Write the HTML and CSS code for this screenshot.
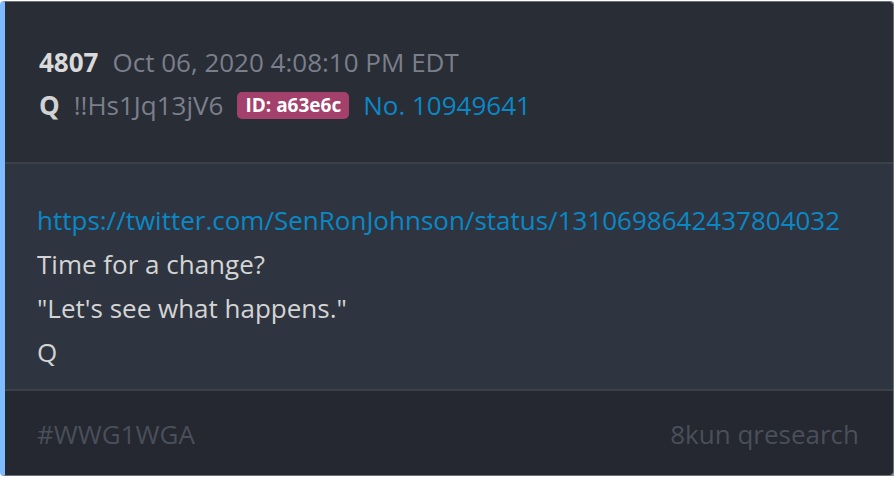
FILE: index.html
```html
<!DOCTYPE html>
<html lang="en">
<head>
  <meta charset="UTF-8">
  <meta name="viewport" content="width=device-width, initial-scale=1.0">
  <title>4807</title>
  <link rel="stylesheet" href="styles.css">
</head>
<body>
  <div class="post">
    <div class="post-header">
      <div class="row">
        <span class="num">4807</span>
        <span class="date">Oct 06, 2020 4:08:10 PM EDT</span>
      </div>
      <div class="row">
        <span class="name">Q</span>
        <span class="trip">!!Hs1Jq13jV6</span>
        <span class="uid">ID: a63e6c</span>
        <a class="postno" href="#">No. 10949641</a>
      </div>
    </div>
    <div class="post-body">
      <p><a href="#">https://twitter.com/SenRonJohnson/status/1310698642437804032</a></p>
      <p>Time for a change?</p>
      <p>"Let's see what happens."</p>
      <p>Q</p>
    </div>
    <div class="post-footer">
      <span>#WWG1WGA</span>
      <span>8kun qresearch</span>
    </div>
  </div>
</body>
</html>
```

FILE: styles.css
```css
body {
  margin: 0;
  background: #ffffff;
  font-family: 'Open Sans', sans-serif;
  font-size: 26px;
}
a {
  color: #0a88c6;
  text-decoration: none;
}
.post {
  width: 888px;
  height: 473px;
  margin-top: 1px;
  border: 1px solid #6d717c;
  border-left: 5px solid #7fbcff;
  border-radius: 4px;
  box-shadow: 1px 1px 0 #8a8d95;
  overflow: hidden;
  display: flex;
  flex-direction: column;
}
.post-header {
  background: #292d36;
  padding: 39px 32px 35px 34px;
  border-bottom: 2px solid #3b404b;
}
.row {
  display: flex;
  align-items: center;
  gap: 14px;
  line-height: 43px;
}
.num {
  font-weight: bold;
  color: #dadada;
}
.date {
  color: #7b7f8b;
}
.name {
  font-weight: bold;
  color: #d2d2d2;
}
.trip {
  color: #7b7f8b;
}
.uid {
  background: #a3416c;
  color: #ffffff;
  font-weight: bold;
  font-size: 19px;
  line-height: 27px;
  padding: 0 8px;
  border-radius: 5px;
}
.post-body {
  background: #2f3540;
  padding: 34px 32px 15px;
  border-bottom: 2px solid #3b404b;
  color: #d4d4d4;
  flex: 1;
}
.post-body p {
  margin: 0;
  line-height: 44px;
}
.post-footer {
  background: #252830;
  padding: 21px 34px 20px 32px;
  line-height: 44px;
  color: #4a4f5a;
  display: flex;
  justify-content: space-between;
}
```
